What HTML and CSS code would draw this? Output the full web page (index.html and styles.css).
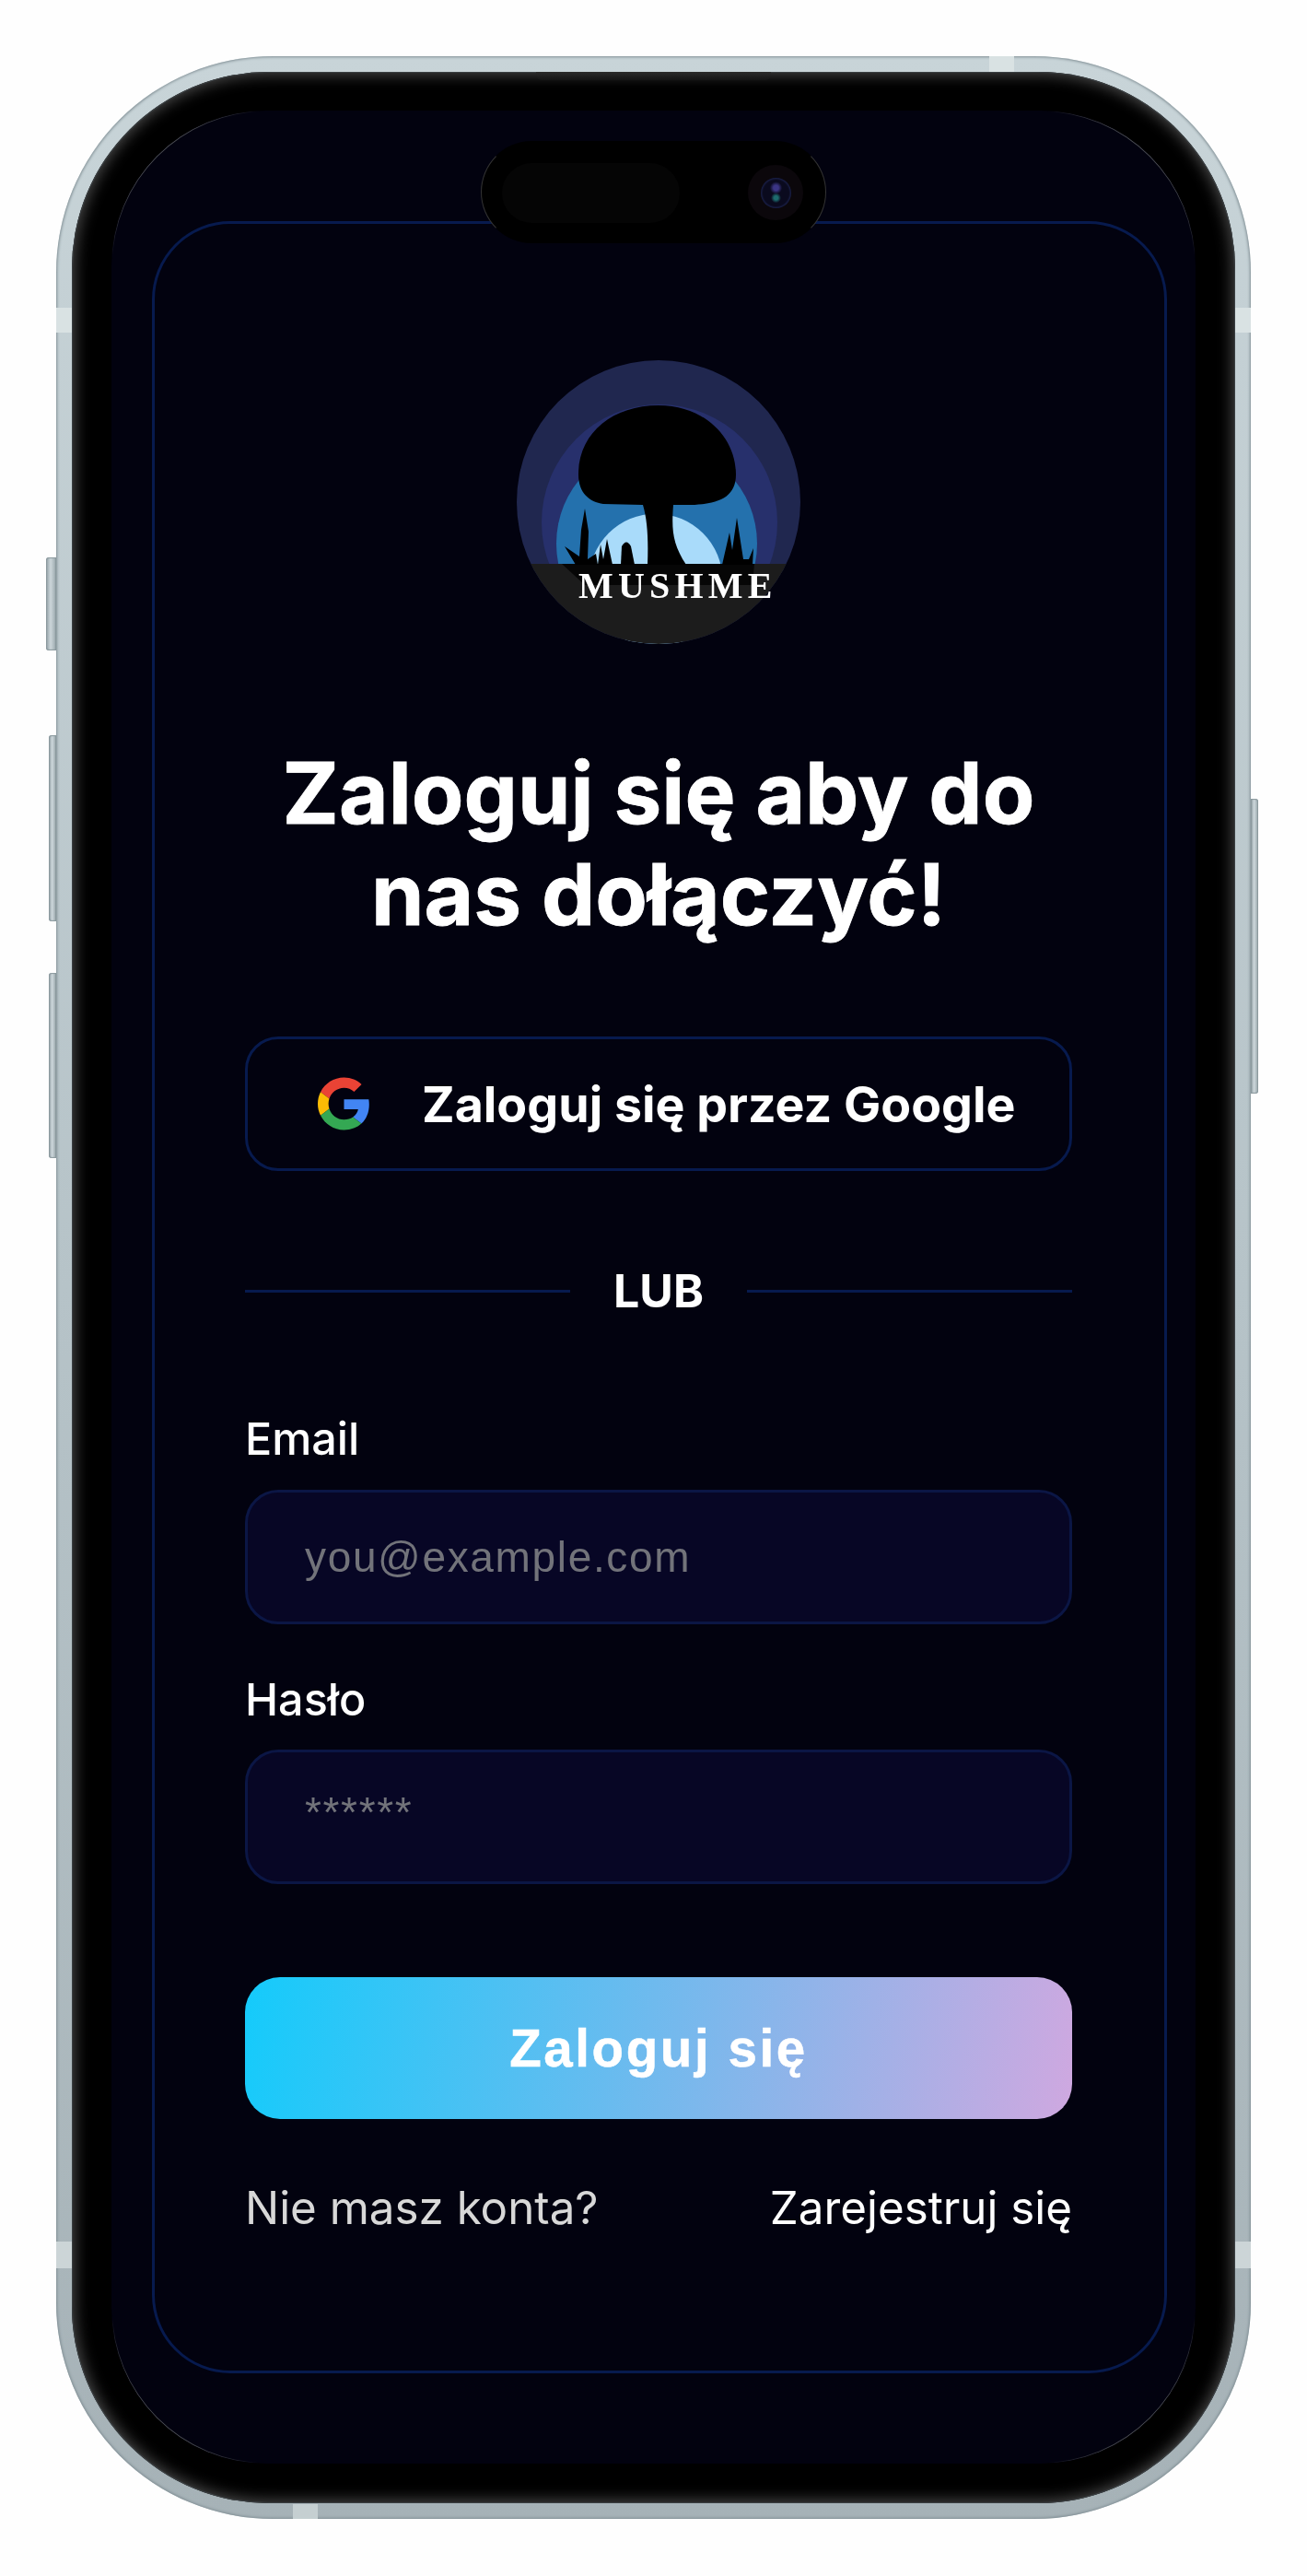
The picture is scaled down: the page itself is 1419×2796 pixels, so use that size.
FILE: index.html
```html
<!DOCTYPE html>
<html lang="pl">
<head>
<meta charset="UTF-8">
<title>Mushme - logowanie</title>
<link rel="stylesheet" href="styles.css">
</head>
<body>

<div class="phone">
  <!-- side keys -->
  <span class="key key-silent"></span>
  <span class="key key-up"></span>
  <span class="key key-down"></span>
  <span class="key key-power"></span>

  <!-- antenna bands -->
  <span class="band band-l1"></span>
  <span class="band band-r1"></span>
  <span class="band band-l2"></span>
  <span class="band band-r2"></span>
  <span class="band band-top"></span>
  <span class="band band-bottom"></span>

  <div class="bezel">
    <span class="speaker"></span>

    <div class="screen">
      <div class="island">
        <span class="island-pill"></span>
        <span class="camera"><span class="lens"></span></span>
      </div>

      <span class="edge edge-tl"></span>
      <span class="edge edge-tr"></span>
      <span class="edge edge-bl"></span>
      <span class="edge edge-br"></span>

      <div class="card">
        <svg class="logo" viewBox="0 0 320 320" aria-label="Mushme">
          <defs>
            <clipPath id="logoClip"><circle cx="160" cy="160" r="154"/></clipPath>
          </defs>
          <g clip-path="url(#logoClip)">
            <rect width="320" height="320" fill="#20274f"/>
            <circle cx="161" cy="182" r="128" fill="#27306c"/>
            <circle cx="158" cy="205" r="109" fill="#2471ad"/>
            <circle cx="157" cy="245" r="72.5" fill="#a9dbfa"/>
            <rect x="0" y="227" width="320" height="100" fill="#1c1c1c"/>
            <polygon points="55,227 80,250 262,250 264,227" fill="#060606"/>
          </g>
          <path d="M73 130C73 85 110 55 160 55C210 55 244 90 244 130C244 155 225 162 195 163L176 163C174 190 175 205 190 228L148 228C149 200 148 180 143 163L100 162C85 160 73 150 73 130Z" fill="#000"/>
          <!-- grass, left -->
          <path d="M58 208L74 219L76 190L80 167L84 192L83 222L92 216L94 228L70 228Z" fill="#000"/>
          <path d="M94 228L97 206L100 222L104 200L107 214L110 228Z" fill="#000"/>
          <path d="M119 228L120 208Q125 199 130 208L134 228Z" fill="#000"/>
          <!-- grass, right -->
          <path d="M229 228L237 193L240 212L245 177L252 222L258 222L263 210L262 228Z" fill="#000"/>
          <text class="logo-text" x="73" y="264">MUSHME</text>
        </svg>

        <h1 class="title">Zaloguj się aby do<br>nas dołączyć!</h1>

        <button class="google-btn" type="button">
          <svg class="google-icon" viewBox="0 0 48 48">
            <path fill="#EA4335" d="M24 9.5c3.54 0 6.71 1.22 9.21 3.6l6.85-6.85C35.9 2.38 30.47 0 24 0 14.62 0 6.51 5.38 2.56 13.22l7.98 6.19C12.43 13.72 17.74 9.5 24 9.5z"/>
            <path fill="#4285F4" d="M46.98 24.55c0-1.57-.15-3.09-.38-4.55H24v9.02h12.94c-.58 2.96-2.26 5.48-4.78 7.18l7.73 6c4.51-4.18 7.09-10.36 7.09-17.65z"/>
            <path fill="#FBBC05" d="M10.53 28.59c-.48-1.45-.76-2.99-.76-4.59s.27-3.14.76-4.59l-7.98-6.19C.92 16.46 0 20.12 0 24c0 3.88.92 7.54 2.56 10.78l7.97-6.19z"/>
            <path fill="#34A853" d="M24 48c6.48 0 11.93-2.13 15.89-5.81l-7.73-6c-2.15 1.45-4.92 2.3-8.16 2.3-6.26 0-11.57-4.22-13.47-9.91l-7.98 6.19C6.51 42.62 14.62 48 24 48z"/>
          </svg>
          Zaloguj się przez Google
        </button>

        <div class="divider"><span>LUB</span></div>

        <form class="login-form">
          <label class="field-label" for="email">Email</label>
          <input class="field-input" id="email" type="text" placeholder="you@example.com">

          <label class="field-label field-label-second" for="pass">Hasło</label>
          <input class="field-input field-pass" id="pass" type="text" placeholder="******">

          <button class="submit-btn" type="button">Zaloguj się</button>
        </form>

        <div class="signup-row">
          <span class="signup-q">Nie masz konta?</span>
          <a class="signup-link" href="#">Zarejestruj się</a>
        </div>
      </div>
    </div>
  </div>
</div>

</body>
</html>
```

FILE: styles.css
```css
body {
  margin: 0;
  background-color: #fefefe;
  font-family: Inter, "Noto Sans", sans-serif;
  color: #fff;
}

/* phone frame */
.phone {
  position: relative;
  width: 1297px;
  height: 2673px;
  margin: 61px 0 0 61px;
  padding: 17px;
  box-sizing: border-box;
  display: flex;
  border-radius: 235px;
  background: linear-gradient(180deg, #c8d4d8 0%, #b6c3c8 50%, #a6b2b7 100%);
  box-shadow: inset 0 0 3px 1px #7f8d93;
}

.bezel {
  position: relative;
  flex: 1;
  display: flex;
  padding: 42px 43px 43px 43px;
  border-radius: 214px;
  background: #000;
  box-shadow: inset 0 0 0 1px #3a3f42, inset 0 0 16px 3px #4a4a4a;
}

.speaker {
  position: absolute;
  left: 504px;
  top: 0;
  width: 255px;
  height: 9px;
  border-radius: 0 0 6px 6px;
  background: linear-gradient(180deg, #2c2c2c, #141414);
}

.key {
  position: absolute;
  background: linear-gradient(90deg, #8f9da3, #ccd6da 45%, #98a6ab);
  box-shadow: inset 0 0 1px 1px #8a989d;
}
.key-silent { left: -11px; top: 544px; width: 11px; height: 101px; border-radius: 3px 0 0 3px; }
.key-up { left: -8px; top: 737px; width: 8px; height: 202px; border-radius: 3px 0 0 3px; }
.key-down { left: -8px; top: 995px; width: 8px; height: 201px; border-radius: 3px 0 0 3px; }
.key-power { right: -8px; top: 806px; width: 8px; height: 320px; border-radius: 0 3px 3px 0; }

.band {
  position: absolute;
  background: #d9e2e3;
}
.band-l1 { left: 0; top: 273px; width: 17px; height: 27px; }
.band-r1 { right: 0; top: 273px; width: 17px; height: 27px; }
.band-l2 { left: 0; top: 2372px; width: 17px; height: 29px; background: #ccd5d7; }
.band-r2 { right: 0; top: 2372px; width: 17px; height: 29px; background: #ccd5d7; }
.band-top { left: 1013px; top: 0; width: 27px; height: 17px; }
.band-bottom { left: 257px; bottom: 0; width: 27px; height: 16px; background: #c5cfd1; }

/* screen */
.screen {
  position: relative;
  flex: 1;
  display: flex;
  padding: 120px 31px 98px 44px;
  border-radius: 168px;
  background: #02020f;
}

/* thin lit line on the rounded screen corners only */
.edge {
  position: absolute;
  width: 168px;
  height: 168px;
  box-sizing: border-box;
  border: 0 solid #6a6d70;
}
.edge-tl { left: 0; top: 0; border-width: 1px 0 0 1px; border-top-left-radius: 168px; -webkit-mask-image: linear-gradient(135deg, #000 22%, transparent 48%); mask-image: linear-gradient(135deg, #000 22%, transparent 48%); }
.edge-tr { right: 0; top: 0; border-width: 1px 1px 0 0; border-top-right-radius: 168px; -webkit-mask-image: linear-gradient(225deg, #000 22%, transparent 48%); mask-image: linear-gradient(225deg, #000 22%, transparent 48%); }
.edge-bl { left: 0; bottom: 0; border-width: 0 0 1px 1px; border-bottom-left-radius: 168px; -webkit-mask-image: linear-gradient(45deg, #000 22%, transparent 48%); mask-image: linear-gradient(45deg, #000 22%, transparent 48%); }
.edge-br { right: 0; bottom: 0; border-width: 0 1px 1px 0; border-bottom-right-radius: 168px; -webkit-mask-image: linear-gradient(315deg, #000 22%, transparent 48%); mask-image: linear-gradient(315deg, #000 22%, transparent 48%); }

.island {
  position: absolute;
  left: 401px;
  top: 33px;
  width: 375px;
  height: 111px;
  z-index: 2;
  box-sizing: border-box;
  border-radius: 56px;
  background: #000;
  border: 1px solid transparent;
  border-left-color: #333;
  border-right-color: #333;
}

.island-pill {
  position: absolute;
  left: 22px;
  top: 23px;
  width: 193px;
  height: 65px;
  border-radius: 33px;
  background: #050505;
}

.camera {
  position: absolute;
  left: 289px;
  top: 25px;
  width: 60px;
  height: 60px;
  border-radius: 50%;
  background: #0b070b;
  display: flex;
  align-items: center;
  justify-content: center;
}

.lens {
  width: 33px;
  height: 33px;
  border-radius: 50%;
  background:
    radial-gradient(circle at 50% 33%, #3b3585 0 10%, transparent 24%),
    radial-gradient(circle at 50% 66%, #1d6b6e 0 8%, transparent 20%),
    radial-gradient(circle, #0a0a1e 0 60%, #1c2350 72% 100%);
}

/* card */
.card {
  flex: 1;
  display: flex;
  flex-direction: column;
  padding: 148px 100px 0 98px;
  border: 3px solid #071a4e;
  border-radius: 85px;
  filter: blur(0.6px);
}

.logo {
  width: 320px;
  height: 320px;
  margin: -6px auto -6px;
  display: block;
}

.logo-text {
  font-family: "Liberation Serif", serif;
  font-size: 40px;
  font-weight: bold;
  letter-spacing: 5.2px;
  fill: #fff;
}

.title {
  margin: 106px 0 100px;
  font-size: 92.5px;
  line-height: 110px;
  font-weight: 700;
  text-align: center;
  -webkit-text-stroke: 0.8px #fff;
}

.google-btn {
  height: 146px;
  display: flex;
  align-items: center;
  gap: 56px;
  padding: 0 0 0 76px;
  box-sizing: border-box;
  border: 3px solid #071a4e;
  border-radius: 36px;
  background: transparent;
  color: #fff;
  font-family: Inter, sans-serif;
  font-size: 53.7px;
  font-weight: 700;
  white-space: nowrap;
}

.google-icon {
  width: 57px;
  height: 58px;
  flex: none;
}

.divider {
  display: flex;
  align-items: center;
  gap: 47px;
  margin: 94px 0 95px;
  height: 72px;
  font-size: 50px;
  font-weight: 700;
}
.divider::before,
.divider::after {
  content: "";
  flex: 1;
  height: 3px;
  background: #071a4e;
}

.login-form {
  display: flex;
  flex-direction: column;
}

.field-label {
  height: 60px;
  line-height: 60px;
  margin-bottom: 25px;
  font-size: 48.5px;
  font-weight: 500;
}
.field-label-second {
  margin-top: 52px;
  margin-bottom: 24px;
}

.field-input {
  height: 146px;
  padding: 0 62px;
  box-sizing: border-box;
  border: 3px solid #0b1645;
  border-radius: 36px;
  background: #070625;
  font-family: "Liberation Sans", sans-serif;
  font-size: 46px;
  letter-spacing: 1.65px;
  color: #fff;
}
.field-input::placeholder {
  color: #72737a;
  opacity: 1;
}
.field-pass {
  padding-bottom: 10px;
}

.submit-btn {
  height: 154px;
  margin-top: 101px;
  border: 0;
  border-radius: 38px;
  background: linear-gradient(100deg, #14cbfb 0%, #cfa8e0 100%);
  color: #fff;
  font-family: "Liberation Sans", sans-serif;
  font-size: 56.5px;
  font-weight: bold;
  letter-spacing: 2.6px;
  -webkit-text-stroke: 0.5px #fff;
}

.signup-row {
  display: flex;
  justify-content: space-between;
  align-items: center;
  height: 72px;
  margin-top: 60px;
  font-size: 49.3px;
}

.signup-q {
  color: #d8d8d8;
}

.signup-link {
  color: #fff;
  text-decoration: none;
}
```
